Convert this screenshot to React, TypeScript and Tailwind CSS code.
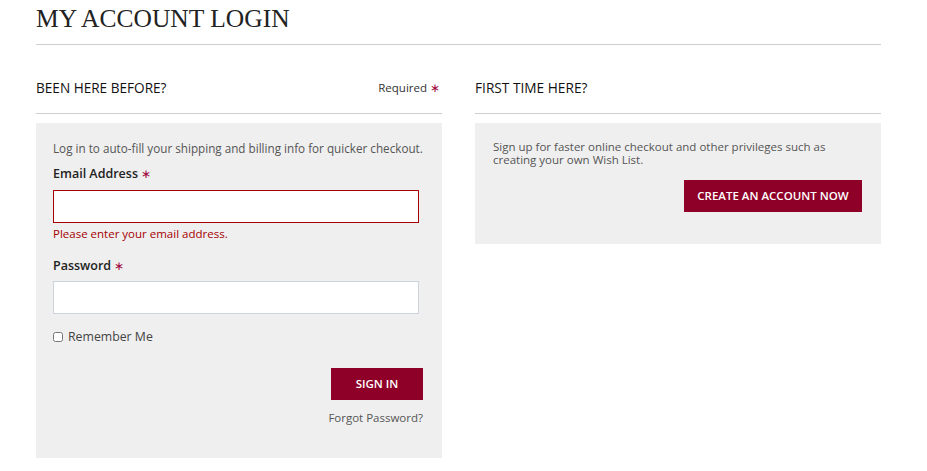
export default function App() {
  return (
    <div className="min-h-screen bg-white font-['Open_Sans',sans-serif] text-[#333]">
      <div className="ml-9 w-[845px]">
        <h1 className="border-b border-[#cfcfcf] pb-[9px] pt-[3px] font-['Liberation_Serif',serif] text-[25.5px] leading-[32px] text-[#222]">
          MY ACCOUNT LOGIN
        </h1>
        <div className="mt-[32px] flex gap-[33px]">
          <div className="w-[406px]">
            <div className="flex items-center justify-between border-b border-[#cfcfcf] pb-[16px] pt-[2px]">
              <h2 className="text-[13.6px] leading-[18px] text-[#111]">BEEN HERE BEFORE?</h2>
              <span className="pr-[2px] text-[11.5px] text-[#333]">
                Required <span className="text-[12px] text-[#a0003a]">∗</span>
              </span>
            </div>
            <div className="mt-[9px] h-[335px] bg-[#efefef] px-[17px] pt-[17px]">
              <p className="text-[11.7px] leading-[16px] text-[#555]">
                Log in to auto-fill your shipping and billing info for quicker checkout.
              </p>
              <label className="mt-[9px] block text-[12.5px] font-semibold leading-[18px] text-[#222]">
                Email Address <span className="text-[12px] font-normal text-[#a0003a]">∗</span>
              </label>
              <input className="mt-[7px] block h-[33px] w-[366px] border border-[#a50000] bg-white outline-none" />
              <p className="mt-[3px] text-[11.5px] leading-[16px] text-[#a50000]">
                Please enter your email address.
              </p>
              <label className="mt-[15px] block text-[12.5px] font-semibold leading-[18px] text-[#222]">
                Password <span className="text-[12px] font-normal text-[#a0003a]">∗</span>
              </label>
              <input
                type="password"
                className="mt-[6px] block h-[33px] w-[366px] border border-[#cdd3dc] bg-white outline-none"
              />
              <label className="mt-[14px] flex items-center gap-[5px] text-[12.3px] leading-[18px] text-[#444]">
                <input type="checkbox" className="h-[10px] w-[10px]" />
                Remember Me
              </label>
              <div className="mt-[22px] flex flex-col items-end pr-[2px]">
                <button className="h-[32px] w-[92px] bg-[#8f0028] text-[11.5px] font-semibold text-white">
                  SIGN IN
                </button>
                <a className="mt-[10px] text-[11.5px] leading-[16px] text-[#555]">Forgot Password?</a>
              </div>
            </div>
          </div>
          <div className="w-[406px]">
            <div className="border-b border-[#cfcfcf] pb-[16px] pt-[2px]">
              <h2 className="text-[13.7px] leading-[18px] text-[#111]">FIRST TIME HERE?</h2>
            </div>
            <div className="mt-[9px] h-[121px] bg-[#efefef] px-[18px] pt-[17px]">
              <p className="w-[350px] text-[11.5px] leading-[13px] text-[#555]">
                Sign up for faster online checkout and other privileges such as creating your own Wish List.
              </p>
              <div className="mt-[14px] flex justify-end pr-[1px]">
                <button className="h-[32px] w-[178px] bg-[#8f0028] text-[11.5px] font-semibold text-white">
                  CREATE AN ACCOUNT NOW
                </button>
              </div>
            </div>
          </div>
        </div>
      </div>
    </div>
  );
}
